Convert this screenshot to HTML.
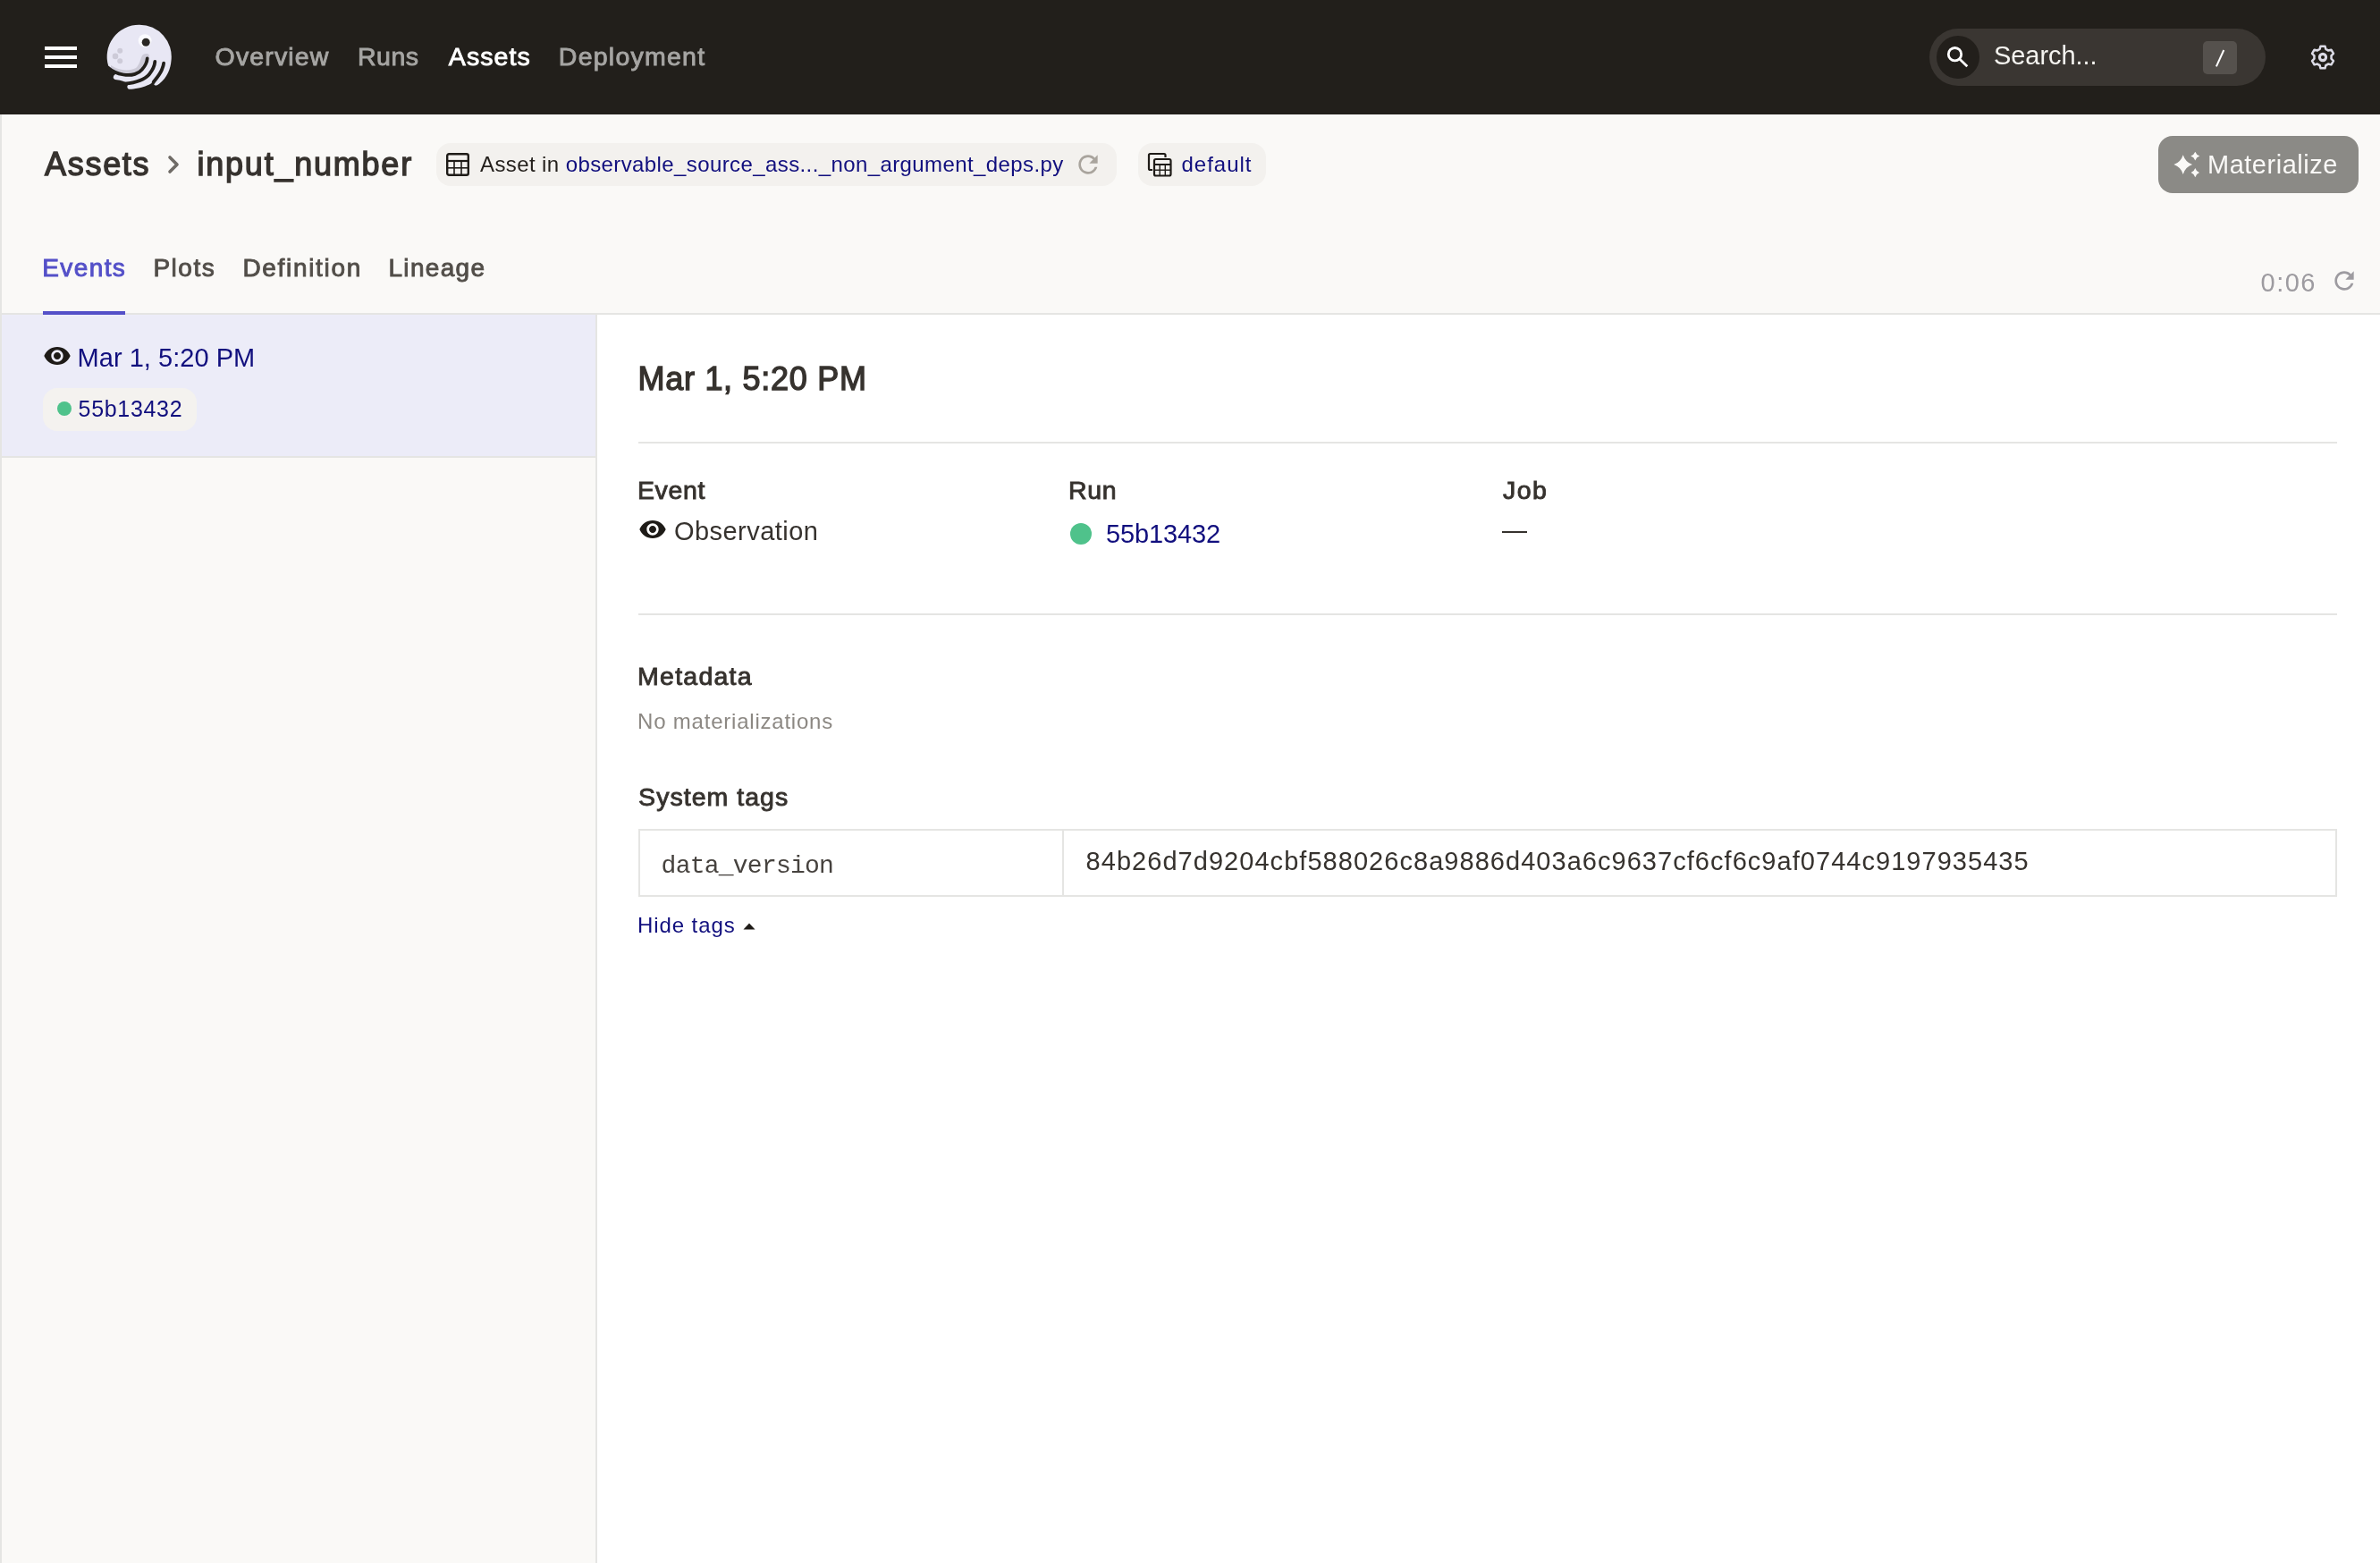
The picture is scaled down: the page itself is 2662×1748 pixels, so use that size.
<!DOCTYPE html>
<html><head><meta charset="utf-8">
<style>
*{margin:0;padding:0;box-sizing:border-box}
html,body{width:2662px;height:1748px;overflow:hidden;background:#fff}
body{position:relative;will-change:transform;font-family:"Liberation Sans",sans-serif;color:#231F1B}
.a{position:absolute;white-space:nowrap;line-height:1}
.b{font-weight:bold}
.sb{-webkit-text-stroke:0.9px currentColor}
.sb9{-webkit-text-stroke:1.35px currentColor}
#nav{position:absolute;left:0;top:0;width:2662px;height:128px;background:#221F1B}
#hdr{position:absolute;left:0;top:128px;width:2662px;height:224px;background:#FAF9F7;border-left:2px solid #E5E5E3;border-bottom:2px solid #E5E5E3}
#left{position:absolute;left:0;top:352px;width:668px;height:1396px;background:#FAF9F7;border-left:2px solid #E5E5E3;border-right:2px solid #E5E5E3}
#sel{position:absolute;left:2px;top:352px;width:664px;height:160px;background:#ECECF8;border-bottom:2px solid #E5E5E3}
.nv{font-size:28.5px;-webkit-text-stroke:0.9px currentColor;color:#A6A5A3}
.pill{position:absolute;background:#F3F1EE;border-radius:16px}
.link{color:#110F7E}
.hr{position:absolute;left:714px;width:1900px;height:2px;background:#E5E5E3}
</style><script>(function(){var w=window.innerWidth;if(w&&Math.abs(w-2662)>2){document.documentElement.style.zoom=(w/2662);}})();</script>
</head><body>
<div id="nav">
  <div style="position:absolute;left:50px;top:52px;width:36px;height:4px;background:#fff"></div>
  <div style="position:absolute;left:50px;top:62px;width:36px;height:4px;background:#fff"></div>
  <div style="position:absolute;left:50px;top:72px;width:36px;height:4px;background:#fff"></div>
  <svg style="position:absolute;left:110px;top:20px" width="90" height="90" viewBox="110 20 90 90">
    <path fill="#E8E7F4" d="M156 27.7 A35.8 35.8 0 0 1 191.5 67.8 C190.8 77 187 87 178.4 93.4 C176.5 95 174 96.5 172.8 95 C172 94 171.8 92.5 171.5 91.5 C168 94.5 162 97 155 98.5 C150 99.5 146 100 144.5 99.8 C142.5 99.5 141.8 97 142.8 95.5 L143.5 93.5 C140 91.5 135 89.8 130.5 89.3 C127.5 89 126.5 87.5 126.8 86 C127 84.5 128 83.3 130 82.8 C126.5 81.5 123 78.5 121.4 74.5 A35.8 35.8 0 0 1 156 27.7 Z"/>
    <path d="M124 73 C132 79 145 80 152 76 C156 73 157 66 159 62 C161 59.5 166 59 167 62 L165 70 C162 79 150 84 136 83 C130 82 126 79 124 76 Z" fill="#CDCBD8"/>
    <path d="M120.5 75.5 C125 79.5 131 82.3 138 83.5 C148 85.2 155.5 82 159 77.6 C163 73 164.5 69 164.7 65.5" stroke="#221F1B" stroke-width="3.8" fill="none" stroke-linecap="round"/>
    <path d="M139.5 93.6 C152 92.5 162 89 167 83 C171 78 173 73 173.3 68.9" stroke="#221F1B" stroke-width="3.8" fill="none" stroke-linecap="round"/>
    <path d="M171.6 92 C175 87.5 179 83 181 78 C182.3 75 183 72.5 183.1 70.7" stroke="#221F1B" stroke-width="3.8" fill="none" stroke-linecap="round"/>
    <circle cx="162.1" cy="45.6" r="7.4" fill="#FBFBFF"/>
    <circle cx="163.2" cy="47.3" r="4.5" fill="#2A2724"/>
    <circle cx="134.2" cy="56.8" r="3" fill="#CDCBD8"/>
    <circle cx="129" cy="62.9" r="3.3" fill="#CDCBD8"/>
    <circle cx="134.2" cy="68.2" r="3" fill="#CDCBD8"/>
  </svg>
<div class="a nv" style="left:240.6px;top:48.9px;letter-spacing:1.14px;font-size:28.5px">Overview</div>
<div class="a nv" style="left:400.0px;top:48.9px;letter-spacing:0.48px;font-size:28.5px">Runs</div>
<div class="a nv" style="left:501.8px;top:48.9px;color:#fff;letter-spacing:1.10px;font-size:28.5px">Assets</div>
<div class="a nv" style="left:624.8px;top:48.9px;letter-spacing:1.25px;font-size:28.5px">Deployment</div>
  <div style="position:absolute;left:2158px;top:32px;width:376px;height:64px;border-radius:32px;background:#3A3632"></div>
  <div style="position:absolute;left:2166px;top:40px;width:48px;height:48px;border-radius:24px;background:#221F1B"></div>
  <svg style="position:absolute;left:2166px;top:40px" width="48" height="48" viewBox="2166 40 48 48">
    <circle cx="2186.5" cy="60.7" r="7.2" stroke="#fff" stroke-width="2.8" fill="none"/>
    <line x1="2191.8" y1="66" x2="2200.3" y2="74.3" stroke="#fff" stroke-width="2.7"/>
  </svg>
<div class="a" style="left:2230.0px;top:47.8px;font-size:29px;color:#F5F4F0;letter-spacing:-0.06px">Search...</div>
  <div style="position:absolute;left:2464px;top:46px;width:38px;height:37px;border-radius:5px;background:#55514D"></div>
  <svg style="position:absolute;left:2464px;top:46px" width="38" height="37"><line x1="14.9" y1="28.3" x2="23.3" y2="10" stroke="#fff" stroke-width="2"/></svg>
  <svg style="position:absolute;left:2582px;top:48px" width="32" height="32" viewBox="0 0 32 32"><path d="M12.60 7.02L13.50 3.65L18.50 3.65L19.40 7.02A9.6 9.6 0 0 1 22.07 8.57L25.44 7.66L27.94 11.99L25.47 14.46A9.6 9.6 0 0 1 25.47 17.54L27.94 20.01L25.44 24.34L22.07 23.43A9.6 9.6 0 0 1 19.40 24.98L18.50 28.35L13.50 28.35L12.60 24.98A9.6 9.6 0 0 1 9.93 23.43L6.56 24.34L4.06 20.01L6.53 17.54A9.6 9.6 0 0 1 6.53 14.46L4.06 11.99L6.56 7.66L9.93 8.57A9.6 9.6 0 0 1 12.60 7.02Z" stroke="#DCDBE6" stroke-width="2.5" fill="none" stroke-linejoin="round"/><circle cx="16" cy="16" r="3.6" stroke="#DCDBE6" stroke-width="3.1" fill="none"/></svg>
</div>

<div id="hdr"></div>
<div class="a sb9" style="left:50.1px;top:166.2px;font-size:36px;color:#36322E;letter-spacing:1.68px">Assets</div>
<svg style="position:absolute;left:184px;top:168px" width="24" height="32" viewBox="0 0 24 32"><path d="M6 8 L14 16 L6 24" stroke="#6F6B66" stroke-width="3.6" fill="none" stroke-linecap="round" stroke-linejoin="round"/></svg>
<div class="a sb9" style="left:220.5px;top:166.2px;font-size:36px;color:#36322E;letter-spacing:1.77px">input_number</div>

<div class="pill" style="left:488px;top:160px;width:761px;height:48px"></div>
<svg style="position:absolute;left:499px;top:171px" width="26" height="26" viewBox="0 0 26 26"><rect x="1.2" y="1.2" width="23.6" height="23.6" rx="2" stroke="#1E1B17" stroke-width="2.4" fill="none"/><line x1="1" y1="9" x2="25" y2="9" stroke="#1E1B17" stroke-width="2.2"/><line x1="1" y1="16.8" x2="25" y2="16.8" stroke="#1E1B17" stroke-width="1.6"/><line x1="9" y1="9" x2="9" y2="25" stroke="#1E1B17" stroke-width="1.6"/><line x1="17" y1="9" x2="17" y2="25" stroke="#1E1B17" stroke-width="1.6"/></svg>
<div class="a" style="left:537.0px;top:171.9px;font-size:24px;color:#231F1B;letter-spacing:0.40px">Asset in <span class="link">observable_source_ass..._non_argument_deps.py</span></div>
<svg style="position:absolute;left:1201px;top:168px" width="32" height="32" viewBox="0 0 24 24"><path fill="#A9A49D" d="M17.65 6.35C16.2 4.9 14.21 4 12 4c-4.42 0-7.99 3.58-7.99 8s3.57 8 7.99 8c3.73 0 6.84-2.55 7.73-6h-2.08c-.82 2.33-3.04 4-5.650 4-3.31 0-6-2.69-6-6s2.69-6 6-6c1.66 0 3.14.69 4.22 1.78L13 11h7V4l-2.35 2.35z"/></svg>

<div class="pill" style="left:1273px;top:160px;width:143px;height:48px"></div>
<svg style="position:absolute;left:1283px;top:170px" width="28" height="28" viewBox="0 0 28 28"><path d="M20.5 6 V3.5 Q20.5 2 19 2 H3.5 Q2 2 2 3.5 V18.5 Q2 20 3.5 20 H6" stroke="#1E1B17" stroke-width="2.2" fill="none"/><rect x="8" y="8" width="18.5" height="18.5" rx="1.8" stroke="#1E1B17" stroke-width="2.2" fill="none"/><line x1="8" y1="14" x2="26.5" y2="14" stroke="#1E1B17" stroke-width="2"/><line x1="8" y1="20.2" x2="26.5" y2="20.2" stroke="#1E1B17" stroke-width="1.4"/><line x1="14.2" y1="14" x2="14.2" y2="26" stroke="#1E1B17" stroke-width="1.4"/><line x1="20.3" y1="14" x2="20.3" y2="26" stroke="#1E1B17" stroke-width="1.4"/></svg>
<div class="a link" style="left:1321.5px;top:171.9px;font-size:24px;letter-spacing:0.99px">default</div>

<div style="position:absolute;left:2414px;top:152px;width:224px;height:64px;border-radius:16px;background:#8B8A86"></div>
<svg style="position:absolute;left:2426px;top:164px" width="40" height="40" viewBox="2426 164 40 40"><path fill="#FAF9F7" d="M2441.75 173.29999999999998 Q2444.35 181.5 2452.05 184.1 Q2444.35 186.7 2441.75 194.9 Q2439.15 186.7 2431.45 184.1 Q2439.15 181.5 2441.75 173.29999999999998ZM2455.3 169.79999999999998 Q2456.6000000000004 173.29999999999998 2460.3 174.6 Q2456.6000000000004 175.9 2455.3 179.4 Q2454.0 175.9 2450.3 174.6 Q2454.0 173.29999999999998 2455.3 169.79999999999998ZM2455.3 187.9 Q2456.6000000000004 191.79999999999998 2460.0 193.1 Q2456.6000000000004 194.4 2455.3 198.29999999999998 Q2454.0 194.4 2450.6000000000004 193.1 Q2454.0 191.79999999999998 2455.3 187.9Z"/></svg>
<div class="a" style="left:2469.0px;top:169.8px;font-size:29px;color:#FAF9F7;letter-spacing:0.51px">Materialize</div>

<div class="a sb" style="left:47.3px;top:285.9px;font-size:28px;color:#5450C8;letter-spacing:1.38px">Events</div>
<div class="a sb" style="left:171.4px;top:285.9px;font-size:28px;color:#524E49;letter-spacing:1.51px">Plots</div>
<div class="a sb" style="left:271.4px;top:285.9px;font-size:28px;color:#524E49;letter-spacing:1.68px">Definition</div>
<div class="a sb" style="left:434.5px;top:285.9px;font-size:28px;color:#524E49;letter-spacing:1.30px">Lineage</div>
<div style="position:absolute;left:48px;top:348px;width:92px;height:4px;background:#5450C8"></div>

<div class="a" style="left:2528.6px;top:301.6px;font-size:29px;color:#9D9BA0;letter-spacing:1.43px">0:06</div>
<svg style="position:absolute;left:2606px;top:298px" width="32" height="32" viewBox="0 0 24 24"><path fill="#9D9BA0" d="M17.65 6.35C16.2 4.9 14.21 4 12 4c-4.42 0-7.99 3.58-7.99 8s3.57 8 7.99 8c3.730 0 6.84-2.55 7.73-6h-2.08c-.82 2.33-3.04 4-5.65 4-3.31 0-6-2.69-6-6s2.69-6 6-6c1.66 0 3.14.69 4.22 1.78L13 11h7V4l-2.35 2.35z"/></svg>

<div id="left"></div>
<div id="sel"></div>
<svg style="position:absolute;left:48px;top:382px" width="32" height="32" viewBox="0 0 24 24"><path fill="#1E1B17" d="M12 4.5C7 4.5 2.73 7.61 1 12c1.73 4.39 6 7.5 11 7.5s9.27-3.11 11-7.5c-1.73-4.39-6-7.5-11-7.5zM12 17c-2.76 0-5-2.240-5-5s2.24-5 5-5 5 2.24 5 5-2.24 5-5 5zm0-8c-1.66 0-3 1.34-3 3s1.34 3 3 3 3-1.34 3-3-1.34-3-3-3z"/></svg>
<div class="a link" style="left:86.6px;top:385.6px;font-size:29px;letter-spacing:0.03px">Mar 1, 5:20 PM</div>
<div class="pill" style="left:48px;top:434px;width:172px;height:48px;background:#F4F2EF"></div>
<div style="position:absolute;left:64px;top:449px;width:16px;height:16px;border-radius:8px;background:#4FC28B"></div>
<div class="a link" style="left:87.6px;top:445.2px;font-size:25px;letter-spacing:0.68px">55b13432</div>

<div class="a sb9" style="left:713.5px;top:406.2px;font-size:36px;color:#36322E;letter-spacing:0.72px">Mar 1, 5:20 PM</div>
<div class="hr" style="top:494px"></div>
<div class="a sb" style="left:712.9px;top:533.9px;font-size:28.5px;color:#36322E;letter-spacing:0.69px">Event</div>
<svg style="position:absolute;left:714px;top:576px" width="32" height="32" viewBox="0 0 24 24"><path fill="#1E1B17" d="M12 4.5C7 4.5 2.73 7.61 1 12c1.73 4.39 6 7.5 11 7.5s9.27-3.11 11-7.5c-1.73-4.39-6-7.5-11-7.5zM12 17c-2.76 0-5-2.24-5-5s2.24-5 5-5 5 2.24 5 5-2.24 5-5 5zm0-8c-1.66 0-3 1.34-3 3s1.34 3 3 3 3-1.34 3-3-1.34-3-3-3z"/></svg>
<div class="a" style="left:753.9px;top:579.8px;font-size:29px;color:#36322E;letter-spacing:0.47px">Observation</div>
<div class="a sb" style="left:1195.0px;top:533.9px;font-size:28.5px;color:#36322E;letter-spacing:0.70px">Run</div>
<div style="position:absolute;left:1197px;top:585px;width:24px;height:24px;border-radius:12px;background:#4FC28B"></div>
<div class="a link" style="left:1237.0px;top:582.6px;font-size:29px;letter-spacing:-0.12px">55b13432</div>
<div class="a sb" style="left:1681.1px;top:533.9px;font-size:28.5px;color:#36322E;letter-spacing:1.35px">Job</div>
<div style="position:absolute;left:1680px;top:594px;width:28px;height:2.4px;background:#36322E"></div>
<div class="hr" style="top:686px"></div>

<div class="a sb" style="left:713.1px;top:741.8px;font-size:28.5px;color:#36322E;letter-spacing:1.24px">Metadata</div>
<div class="a" style="left:713.1px;top:794.8px;font-size:24px;color:#8C8883;letter-spacing:0.78px">No materializations</div>
<div class="a sb" style="left:714.1px;top:876.9px;font-size:28.5px;color:#36322E;letter-spacing:1.03px">System tags</div>
<div style="position:absolute;left:714px;top:927px;width:1900px;height:76px;border:2px solid #E5E5E3"></div>
<div style="position:absolute;left:1188px;top:927px;width:2px;height:76px;background:#E5E5E3"></div>
<div class="a" style="left:739.6px;top:955.3px;font-size:28px;font-family:'Liberation Mono',monospace;color:#46423E;letter-spacing:-0.76px">data_version</div>
<div class="a" style="left:1214.6px;top:948.6px;font-size:29px;color:#36322E;letter-spacing:1.04px">84b26d7d9204cbf588026c8a9886d403a6c9637cf6cf6c9af0744c9197935435</div>
<div class="a link" style="left:713.1px;top:1023.4px;font-size:24px;letter-spacing:0.90px">Hide tags</div>
<svg style="position:absolute;left:830px;top:1030px" width="16" height="12"><path d="M1.5 9.6 L8 2.4 L14.5 9.6Z" fill="#1E1B17"/></svg>
</body></html>
